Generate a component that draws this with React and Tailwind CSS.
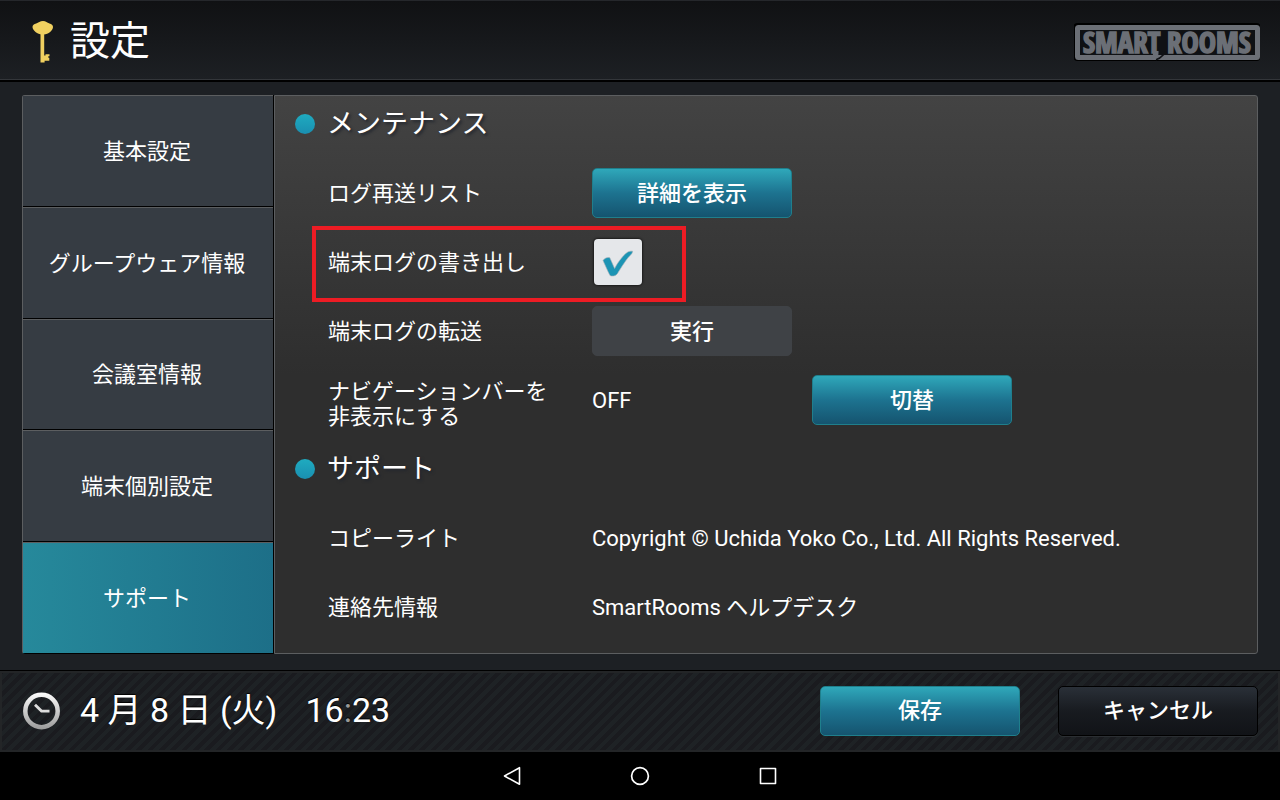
import { useState } from 'react';

const TABS = ['基本設定', 'グループウェア情報', '会議室情報', '端末個別設定', 'サポート'];

function KeyIcon() {
  return (
    <svg width="22" height="42" viewBox="0 0 22 42" fill="#f0d060" aria-hidden="true">
      <path d="M11 0C14 0 15 1.6 17.5 2.6C19.5 3.4 21 4 21 6C21 9 16.5 13.5 11.7 13.5L10 13.5C5.5 13.5 0.5 9 0.5 6C0.5 4 2 3.4 4.2 2.6C6.5 1.6 8 0 11 0Z" />
      <path d="M8.5 12H12.2V34.5H13.5V33.3H17.5V35.3H16.3V36.8H17.3V39.8H12.6V41.5H8.5Z" />
    </svg>
  );
}

function Logo() {
  return (
    <svg width="186" height="38" viewBox="0 0 186 38" role="img" aria-label="SMART ROOMS">
      <rect x="2.5" y="3.5" width="181" height="31" rx="1" fill="none" stroke="#000" strokeWidth="7" />
      <rect x="3.5" y="4.5" width="180" height="30" rx="1" fill="#0f1114" stroke="#6b6f76" strokeWidth="5" />
      <g
        fill="#6b6f76"
        stroke="#6b6f76"
        strokeWidth="1.6"
        fontFamily="'Open Sans Condensed', 'Roboto Condensed', 'Noto Sans Condensed', Roboto, sans-serif"
        fontWeight="700"
        fontSize="29"
      >
        <text x="9" y="30">SMART</text>
        <text x="93" y="30">ROOMS</text>
      </g>
      <path d="M79 28H84.500V30C84.500 34 82 36 76 36.500C78.500 35 79 33 79 30Z" fill="#6b6f76" />
      <path d="M82 36.800C87 35.500 88 33 92.500 28.500" fill="none" stroke="#0f1114" strokeWidth="1.600" />
    </svg>
  );
}

function ClockIcon() {
  return (
    <svg width="38" height="38" viewBox="0 0 38 38" fill="none" aria-hidden="true">
      <defs>
        <linearGradient id="clock" x1="0" y1="0" x2="0" y2="38" gradientUnits="userSpaceOnUse">
          <stop offset="0" stopColor="#fff" />
          <stop offset="1" stopColor="#999" />
        </linearGradient>
      </defs>
      <circle cx="19.5" cy="19" r="16.2" stroke="url(#clock)" strokeWidth="4.5" />
      <path d="M13 12.7L19.5 19.1H27.5" stroke="#ddd" strokeWidth="2.8" />
    </svg>
  );
}

function Button({ children, variant = 'primary', ...props }) {
  const styles = {
    primary: 'border-[#1f7f8c] bg-linear-to-b from-[#2fa8ba] via-[#1d7390] to-[#15546f]',
    dark: 'border-black bg-linear-to-b from-[#2a3038] via-[#181b20] to-[#111317] shadow-[0_1px_0_#2b2e32]',
    disabled: 'border-[#3f4246] bg-[#3f4246]',
  };
  return (
    <button
      type="button"
      className={`h-[50px] w-[200px] shrink-0 rounded-[5px] border text-[22px] font-medium ${styles[variant]}`}
      {...props}
    >
      {children}
    </button>
  );
}

function Heading({ children }) {
  return (
    <h2 className="flex h-14 items-center gap-3 pl-5 text-[27px] [text-shadow:2px_2px_3px_#22262e]">
      <span className="size-5 rounded-full bg-linear-to-b from-[#1fabc0] to-[#1a8fb0]" />
      {children}
    </h2>
  );
}

function Row({ label, htmlFor, multiline, children }) {
  const Label = htmlFor ? 'label' : 'span';
  return (
    <div className="relative flex h-14 items-center pl-[53px]">
      <Label
        htmlFor={htmlFor}
        className={`w-[264px] shrink-0 leading-[25px] ${multiline ? 'pt-2 whitespace-pre-line' : ''}`}
      >
        {label}
      </Label>
      {children}
    </div>
  );
}

export default function App() {
  const [tab, setTab] = useState('サポート');
  const [exportLog, setExportLog] = useState(true);
  const [navHidden, setNavHidden] = useState(false);

  return (
    <div className="flex min-h-screen flex-col bg-[#1d2024] font-[Roboto,'Noto_Sans_CJK_JP',sans-serif] text-[22px] text-white">
      <header className="flex h-[82px] items-center justify-between border-b-2 border-black bg-linear-to-b from-[#101113] to-[#1d2024] pt-[3px] pr-5 pl-8 shadow-[inset_0_-1px_0_#33363a,inset_0_1px_0_#25272b]">
        <div className="flex items-center gap-4">
          <KeyIcon />
          <h1 className="text-[40px] leading-[60px]">設定</h1>
        </div>
        <Logo />
      </header>

      <main className="flex flex-1 px-[22px] pt-[13px] pb-4">
        <nav className="flex w-[252px] shrink-0 flex-col overflow-hidden rounded-l-[3px] border-r border-black">
          {TABS.map((name) => (
            <button
              key={name}
              type="button"
              onClick={() => setTab(name)}
              className={`flex-1 border-t border-l border-[#5c5e60] pr-0.5 shadow-[inset_0_-1px_0_#000] ${
                name === tab ? 'bg-linear-to-r from-[#26899b] to-[#1d6f88]' : 'bg-[#363c43]'
              }`}
            >
              {name}
            </button>
          ))}
        </nav>

        <section className="flex flex-1 flex-col gap-[13px] rounded-r-[3px] border border-[#5c5e60] bg-linear-to-b from-[#434343] via-[#2e2e2e] to-[#2e2e2e]">
          <Heading>メンテナンス</Heading>
          <Row label="ログ再送リスト">
            <Button>詳細を表示</Button>
          </Row>
          <Row label="端末ログの書き出し" htmlFor="export-log">
            <span className="relative ml-0.5 flex h-[46px] w-12">
              <input
                id="export-log"
                type="checkbox"
                checked={exportLog}
                onChange={(e) => setExportLog(e.target.checked)}
                className="h-full w-full appearance-none rounded-[4px] bg-[#e5e7ea] shadow-[0_0_2px_1px_#1c1c1c]"
              />
              {exportLog && (
                <svg className="pointer-events-none absolute top-0 left-0" width="48" height="46" viewBox="0 0 48 46" aria-hidden="true">
                  <path
                    d="M9 21.5C10.5 19 13.5 18 15.8 18.7L20.6 29.5C24.5 22 30 15.5 33.5 13.2C35 12.2 37 12 38.7 12.2L38 14.5C33 19 27.5 28 23.5 34.5C22 37 18 37.8 16 36.5C13.5 32 11 25.5 9 21.5Z"
                    fill="#1c94b4"
                    stroke="#aab2b8"
                    strokeWidth="0.6"
                  />
                </svg>
              )}
            </span>
            <span className="pointer-events-none absolute -top-2 left-[37px] h-[76px] w-[374px] border-4 border-[#ed1c24]" />
          </Row>
          <Row label="端末ログの転送">
            <Button variant="disabled">実行</Button>
          </Row>
          <Row label={'ナビゲーションバーを\n非表示にする'} multiline>
            <span className="w-[220px]">{navHidden ? 'ON' : 'OFF'}</span>
            <Button onClick={() => setNavHidden((v) => !v)}>切替</Button>
          </Row>
          <Heading>サポート</Heading>
          <Row label="コピーライト">Copyright © Uchida Yoko Co., Ltd. All Rights Reserved.</Row>
          <Row label="連絡先情報">SmartRooms ヘルプデスク</Row>
        </section>
      </main>

      <footer className="flex h-[82px] items-center justify-between border-t border-black bg-[repeating-linear-gradient(135deg,#1a1b1f_0px,#1a1b1f_4px,#1e2225_4px,#1e2225_8px)] px-[22px] pb-0.5 shadow-[inset_0_0_0_2px_#232527]">
        <div className="flex items-center text-[34px] [text-shadow:0_-1px_1px_#000]">
          <ClockIcon />
          <span className="ml-5">4 月 8 日 (火)</span>
          <time className="ml-7">
            16<span className="text-[#999]">:</span>23
          </time>
        </div>
        <div className="flex gap-[38px]">
          <Button>保存</Button>
          <Button variant="dark">キャンセル</Button>
        </div>
      </footer>

      <nav className="flex h-12 items-center justify-center gap-[104px] bg-black">
        <button type="button" aria-label="戻る">
          <svg width="24" height="24" viewBox="0 0 24 24" fill="none" stroke="#fff" strokeWidth="1.6" strokeLinejoin="round">
            <path d="M19.5 3.7V20.3L4.5 12Z" />
          </svg>
        </button>
        <button type="button" aria-label="ホーム">
          <svg width="24" height="24" viewBox="0 0 24 24" fill="none" stroke="#fff" strokeWidth="1.7">
            <circle cx="12" cy="12" r="8.4" />
          </svg>
        </button>
        <button type="button" aria-label="履歴">
          <svg width="24" height="24" viewBox="0 0 24 24" fill="none" stroke="#fff" strokeWidth="1.6" strokeLinejoin="round">
            <rect x="4.5" y="4.5" width="15" height="15" />
          </svg>
        </button>
      </nav>
    </div>
  );
}
